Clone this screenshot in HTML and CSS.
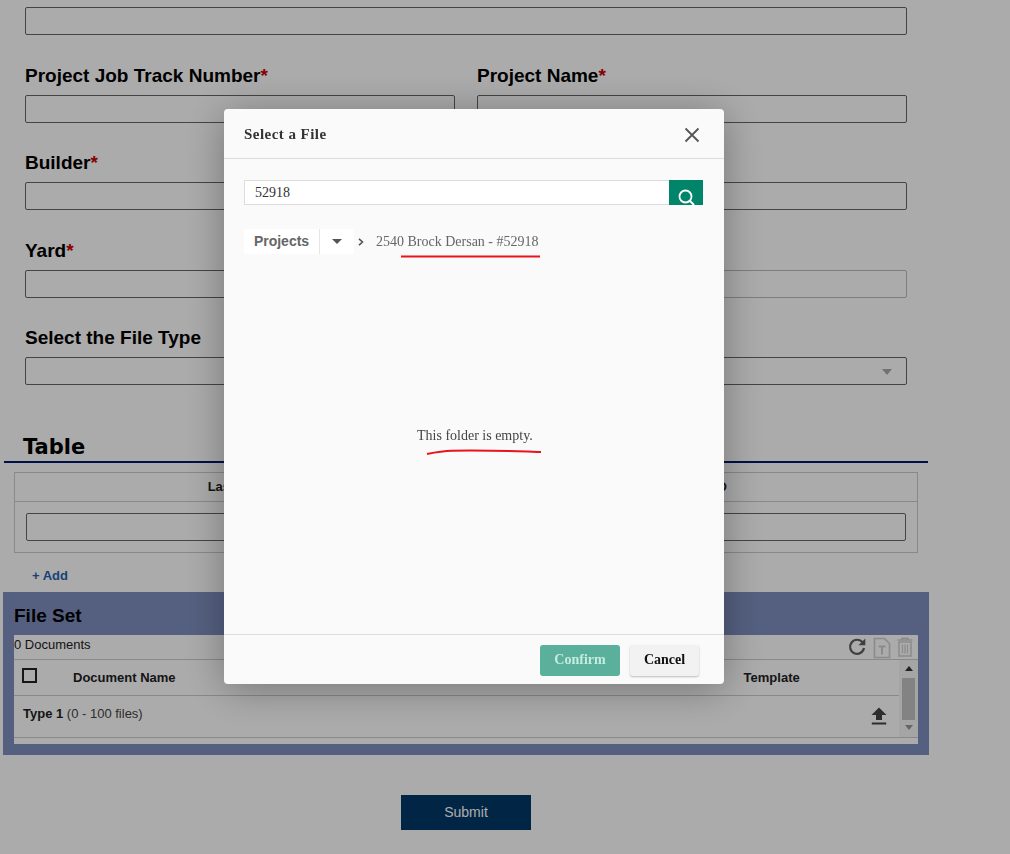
FILE: index.html
```html
<!DOCTYPE html>
<html lang="en">
<head>
<meta charset="utf-8">
<title>Select a File</title>
<link rel="stylesheet" href="styles.css">
</head>
<body>
<main class="page">
  <div class="top-input"><div class="input"></div></div>
  <section class="form-grid">
    <div class="field"><label class="label">Project Job Track Number<span class="req">*</span></label><div class="input"></div></div>
    <div class="field"><label class="label">Project Name<span class="req">*</span></label><div class="input"></div></div>
    <div class="field"><label class="label">Builder<span class="req">*</span></label><div class="input"></div></div>
    <div class="field"><span class="label"></span><div class="input"></div></div>
    <div class="field"><label class="label">Yard<span class="req">*</span></label><div class="input"></div></div>
    <div class="field"><span class="label"></span><div class="input disabled"></div></div>
    <div class="field"><label class="label">Select the File Type</label><div class="input"></div></div>
    <div class="field"><span class="label"></span><div class="input select"><span class="select-caret"></span></div></div>
  </section>

  <h2 class="section-title">Table</h2>
  <section class="data-table">
    <div class="dt-head"><span>Last Name</span><span class="dt-second">Project ID</span></div>
    <div class="dt-row"><div class="input"></div></div>
  </section>
  <a class="add-link">+ Add</a>

  <section class="fileset">
    <h3 class="fileset-title">File Set</h3>
    <div class="fileset-inner">
      <div class="fs-toolbar">
        <span class="fs-count">0 Documents</span>
        <div class="fs-icons">
          <svg class="ic-refresh" width="20" height="20" viewBox="0 0 20 20"><path d="M15.600 5.400A7 7 0 1 0 17 11" fill="none" stroke="#5f5f5f" stroke-width="2.200"/><path d="M11.500 8.200h6.800V1.400z" fill="#5f5f5f"/></svg>
          <svg class="ic-file" width="18" height="22" viewBox="0 0 18 22"><path d="M1.500 1.500h10l5 5v14h-15z" fill="none" stroke="#cfcfcf" stroke-width="1.600"/><path d="M5.500 8.500h7v2h-2.500v7h-2v-7h-2.500z" fill="#cfcfcf"/></svg>
          <svg class="ic-trash" width="16" height="20" viewBox="0 0 16 20"><path d="M2 5h12v14H2z M0.500 3h15 M5 3V1.200h6V3" fill="none" stroke="#cfcfcf" stroke-width="1.500"/><path d="M5.500 7.500v9M8 7.500v9M10.500 7.500v9" stroke="#cfcfcf" stroke-width="1.200"/></svg>
        </div>
      </div>
      <div class="fs-grid">
        <div class="fs-main">
          <div class="fs-head">
            <span class="checkbox"></span>
            <span class="col-name">Document Name</span>
            <span class="col-template">Template</span>
          </div>
          <div class="fs-row">
            <span><b>Type 1</b> (0 - 100 files)</span>
            <svg class="ic-upload" width="16" height="18" viewBox="0 0 16 18"><path d="M8 0.500 15.500 8H11v5H5V8H0.500z M0.800 15.500h14.400v2H0.800z" fill="#444"/></svg>
          </div>
        </div>
        <div class="scrollbar">
          <span class="sb-up"></span>
          <span class="sb-thumb"></span>
          <span class="sb-down"></span>
        </div>
      </div>
    </div>
  </section>

  <div class="submit-wrap"><button class="submit">Submit</button></div>
</main>

<div class="overlay">
  <div class="modal">
    <header class="modal-head">
      <h4 class="modal-title">Select a File</h4>
      <svg class="ic-close" width="16" height="16" viewBox="0 0 16 16"><path d="M1.500 1.500 14.500 14.500M14.500 1.500 1.500 14.500" stroke="#555" stroke-width="1.800" fill="none"/></svg>
    </header>
    <div class="modal-body">
      <div class="search">
        <div class="search-input">52918</div>
        <div class="search-btn"><svg width="34" height="25" viewBox="0 0 34 25"><circle cx="16.500" cy="16.500" r="6" fill="none" stroke="#fff" stroke-width="1.800"/><path d="M20.800 20.800 25 25" stroke="#fff" stroke-width="2"/></svg></div>
      </div>
      <nav class="crumbs">
        <span class="crumb-root">Projects</span>
        <span class="crumb-drop"><span class="crumb-caret"></span></span>
        <svg class="crumb-sep" width="6" height="8" viewBox="0 0 6 8"><path d="M1 .8 4.500 4 1 7.200" fill="none" stroke="#555" stroke-width="1.600"/></svg>
        <span class="crumb-current">2540 Brock Dersan - #52918</span>
      </nav>
      <div class="empty">This folder is empty.</div>
      <svg class="annotations" width="500" height="360" viewBox="0 0 500 360">
        <path d="M177 16.500H316" stroke="#e8131b" stroke-width="2" fill="none"/>
        <path d="M203 214C213 212 218 211 228 210.800C255 210 285 211 317 212" stroke="#e8131b" stroke-width="2" fill="none"/>
      </svg>
    </div>
    <footer class="modal-foot">
      <button class="btn-confirm">Confirm</button>
      <button class="btn-cancel">Cancel</button>
    </footer>
  </div>
</div>
</body>
</html>
```
FILE: styles.css
```css
* { box-sizing: border-box; }
html, body { margin: 0; padding: 0; height: 100%; overflow: hidden; background: #fff; }
body { font-family: "Liberation Sans", Arial, sans-serif; color: #000; }
.page { width: 1010px; height: 854px; overflow: hidden; }

.top-input { padding: 7px 103px 0 25px; height: 63px; }
.input { height: 28px; border: 1px solid #666; border-radius: 2px; background: #fff; }
.input.disabled { border-color: #bbb; }
.input.select { position: relative; }
.select-caret { position: absolute; right: 14px; top: 11px; border: 5px solid transparent; border-top: 6px solid #aaa; border-bottom: 0; }

.form-grid { display: grid; grid-template-columns: 430px 430px; column-gap: 22px; row-gap: 27.400px; padding-left: 25px; }
.label { display: block; height: 25px; line-height: 25px; margin-bottom: 7px; font-size: 19px; font-weight: 700; color: #000; }
.req { color: #c00; }

.section-title { margin: 48.800px 0 0 4px; width: 924px; height: 29px; padding-left: 19px; font: 700 21px/26px "DejaVu Sans", sans-serif; border-bottom: 2px solid #001a6e; }
.data-table { margin: 9px 0 0 14px; width: 904px; height: 81px; border: 1px solid #ccc; }
.dt-head { display: grid; grid-template-columns: 451px 1fr; height: 29px; border-bottom: 1px solid #ccc; text-align: center; font-size: 13px; font-weight: 700; line-height: 28px; color: #222; }
.dt-second { padding-left: 10px; }
.dt-row { padding: 11px 11px 0; }
.add-link { display: block; margin: 14px 0 0 32px; height: 17px; font-size: 13px; line-height: 17px; font-weight: 700; color: #2563b0; }

.fileset { margin: 8px 0 0 3px; width: 926px; height: 163px; padding: 11px 11px 11px; background: #7f90c0; }
.fileset-title { margin: 0; height: 32px; font-size: 19px; line-height: 26px; color: #000; }
.fileset-inner { width: 904px; height: 109px; background: #fff; color: #222; }
.fs-toolbar { display: flex; justify-content: space-between; height: 25px; border-bottom: 1px solid #ccc; }
.fs-count { font-size: 13px; line-height: 20px; }
.fs-icons { display: flex; align-items: flex-start; gap: 6px; padding: 2px 5px 0 0; }
.fs-grid { display: flex; height: 78px; border-bottom: 1px solid #ccc; }
.fs-main { flex: 1; }
.fs-head { display: flex; align-items: center; height: 36px; border-bottom: 1px solid #ccc; font-size: 13px; font-weight: 700; position: relative; }
.checkbox { width: 15px; height: 15px; margin: -4px 0 0 8px; border: 2px solid #222; background: #fff; }
.col-name { margin-left: 36px; }
.col-template { margin-left: 568px; }
.fs-row { display: flex; justify-content: space-between; align-items: center; height: 41px; padding: 0 12px 6px 9px; font-size: 13px; color: #444; }
.fs-row b { color: #222; }
.ic-upload { margin-top: 5px; }
.scrollbar { width: 19px; position: relative; background: #f6f6f6; display: flex; flex-direction: column; align-items: center; padding-top: 6px; }
.sb-up { border: 4px solid transparent; border-bottom: 5px solid #333; border-top: 0; margin-bottom: 7px; }
.sb-thumb { width: 13px; height: 42px; background: #c3c3c3; }
.sb-down { border: 4px solid transparent; border-top: 5px solid #999; border-bottom: 0; margin-top: 5px; }

.submit-wrap { display: flex; justify-content: center; margin-top: 40px; padding-right: 78px; }
.submit { width: 130px; height: 35px; border: 0; background: #003868; color: #fff; font: 14px "Liberation Sans", Arial, sans-serif; }

.overlay { position: fixed; inset: 0; background: rgba(0, 0, 0, .33); padding: 109px 0 0 224px; }
.modal { width: 500px; height: 575px; display: flex; flex-direction: column; background: #fafafa; border-radius: 4px; box-shadow: 0 5px 40px rgba(0, 0, 0, .32); font-family: "Liberation Serif", "Times New Roman", serif; }
.modal-head { display: flex; justify-content: space-between; align-items: center; height: 50px; padding: 0 24px 0 20px; border-bottom: 1px solid #ddd; }
.modal-title { margin: 2px 0 0; font-size: 15px; font-weight: 700; color: #333; letter-spacing: .45px; }
.ic-close { margin-top: 2px; }
.modal-body { flex: 1; position: relative; padding: 21px 21px 0 20px; }
.search { display: flex; height: 25px; }
.search-input { flex: 1; background: #fff; border: 1px solid #ddd; border-right: 0; padding-left: 10px; font-size: 14px; line-height: 23px; color: #333; }
.search-btn { width: 34px; height: 25px; background: #00856a; overflow: hidden; }
.search-btn svg { display: block; }
.crumbs { display: flex; align-items: center; margin-top: 24px; height: 25px; }
.crumb-root { width: 75px; height: 25px; background: #fff; text-align: center; font: 700 14px/24px "Liberation Sans", Arial, sans-serif; color: #666; }
.crumb-drop { width: 35px; height: 25px; background: #fff; display: flex; align-items: center; justify-content: center; border-left: 1px solid #e6e6e6; }
.crumb-caret { border: 5px solid transparent; border-top: 5px solid #555; border-bottom: 0; }
.crumb-sep { margin-left: 4px; }
.crumb-current { margin-left: 12px; font-size: 14px; color: #666; }
.empty { margin-top: 173px; padding-left: 173px; font-size: 14px; line-height: 18px; color: #444; }
.annotations { position: absolute; left: 0; top: 81px; pointer-events: none; }
.modal-foot { display: flex; justify-content: flex-end; gap: 10px; height: 50px; padding: 10px 25px 0 0; border-top: 1px solid #ddd; }
.btn-confirm, .btn-cancel { height: 31px; border: 0; border-radius: 3px; padding: 0 0 2px; font: 700 14px "Liberation Serif", "Times New Roman", serif; }
.btn-confirm { width: 80px; background: #5bb09c; color: #c6ebe0; }
.btn-cancel { width: 69px; background: #f2f2f2; color: #111; box-shadow: 0 1px 2px rgba(0, 0, 0, .25); }
```
